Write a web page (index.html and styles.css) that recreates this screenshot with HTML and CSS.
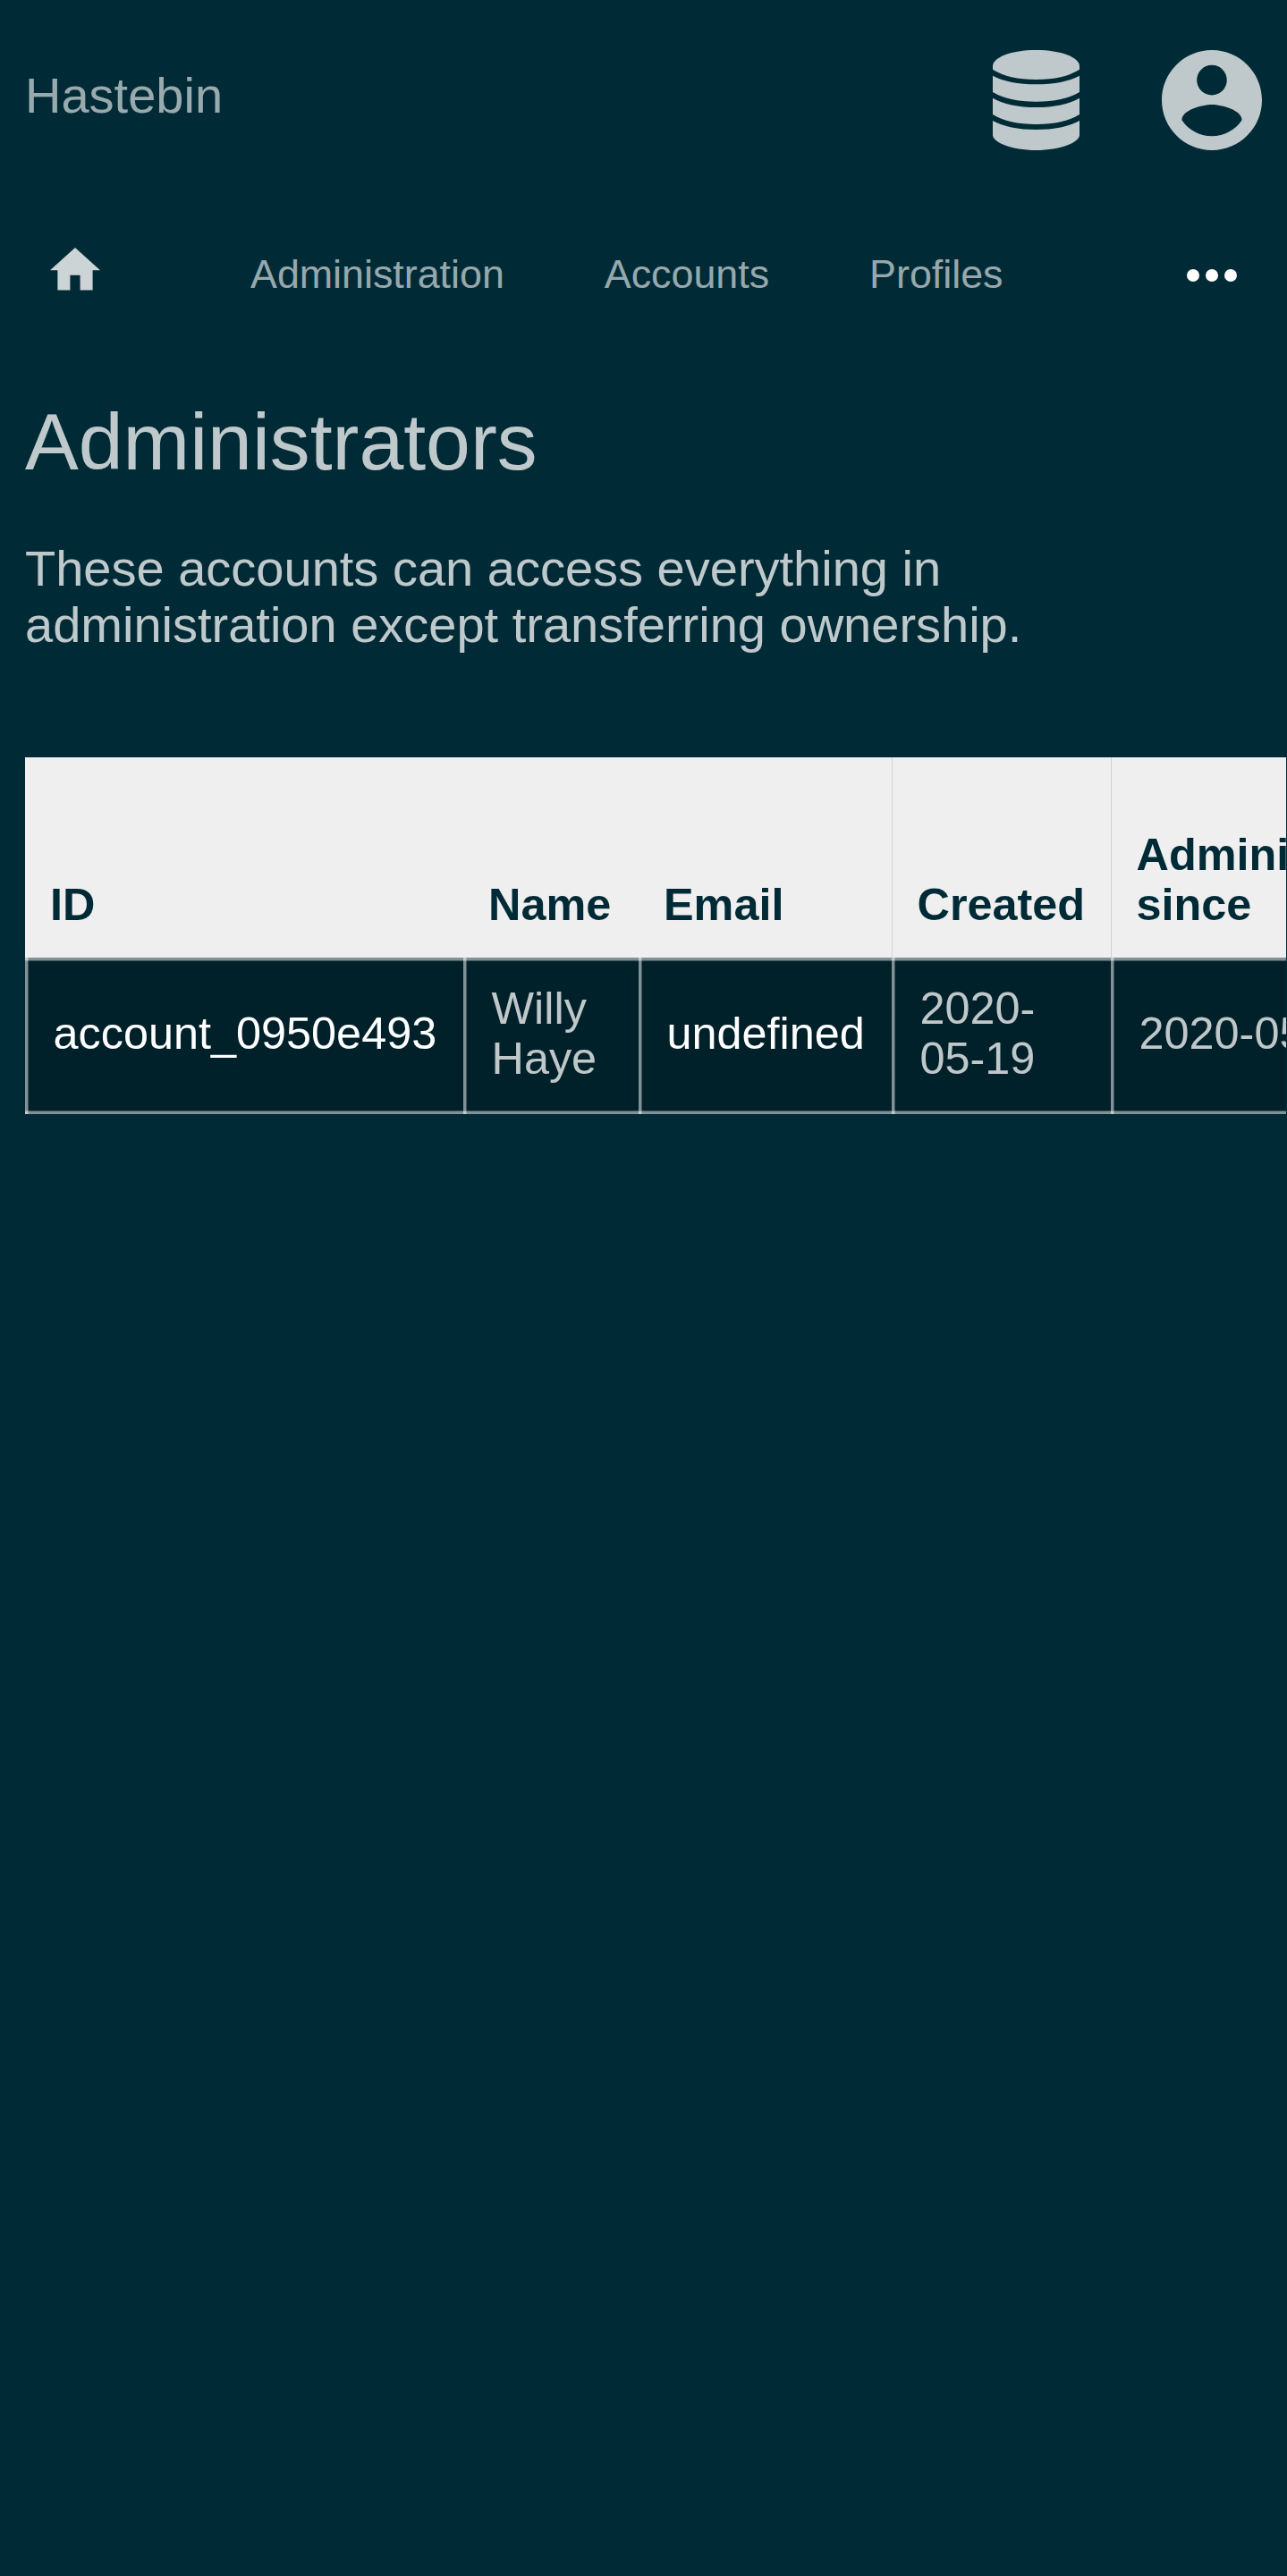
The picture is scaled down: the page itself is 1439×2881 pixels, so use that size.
FILE: index.html
```html
<!DOCTYPE html>
<html lang="en">
<head>
<meta charset="utf-8">
<title>Hastebin - Administrators</title>
<link rel="stylesheet" href="styles.css">
</head>
<body>
<header class="topbar">
  <a class="brand">Hastebin</a>
  <div class="tools">
    <svg class="icon-db" viewBox="0 0 97 112" aria-hidden="true">
      <path d="M0 18C0 8 21 0 48.500 0S97 8 97 18V21.700Q79 33 48.500 33T0 21.700Z"/>
      <path d="M0 28.700Q18 38.300 48.500 38.300T97 28.700V47Q79 57.700 48.500 57.700T0 47Z"/>
      <path d="M0 53.700Q18 64 48.500 64T97 53.700V72Q79 83 48.500 83T0 72Z"/>
      <path d="M0 79Q18 89 48.500 89T97 79V95C97 103 76 112 48.500 112S0 103 0 95Z"/>
    </svg>
    <svg class="icon-account" viewBox="2 2 20 20" aria-hidden="true">
      <path d="M12 2C6.480 2 2 6.480 2 12s4.480 10 10 10 10-4.480 10-10S17.520 2 12 2zm0 3c1.660 0 3 1.340 3 3s-1.340 3-3 3-3-1.340-3-3 1.340-3 3-3zm0 14.200c-2.500 0-4.710-1.280-6-3.220.030-1.990 4-3.080 6-3.080 1.990 0 5.970 1.090 6 3.080-1.290 1.940-3.500 3.220-6 3.220z"/>
    </svg>
  </div>
</header>
<nav class="nav">
  <svg class="icon-home" viewBox="2 3 20 17" aria-hidden="true"><path d="M10 20v-6h4v6h5v-8h3L12 3 2 12h3v8z"/></svg>
  <div class="links">
    <a>Administration</a>
    <a>Accounts</a>
    <a>Profiles</a>
  </div>
  <svg class="icon-more" viewBox="0 0 56 14" aria-hidden="true"><circle cx="7" cy="7" r="7"/><circle cx="28" cy="7" r="7"/><circle cx="49" cy="7" r="7"/></svg>
</nav>
<main class="content">
  <h1>Administrators</h1>
  <p class="intro">These accounts can access everything in administration except transferring ownership.</p>
  <div class="table-scroll">
    <table>
      <colgroup><col class="c-id"><col class="c-name"><col class="c-email"><col class="c-created"><col class="c-since"></colgroup>
      <thead>
        <tr><th>ID</th><th>Name</th><th>Email</th><th class="ruled">Created</th><th class="ruled">Administrator since</th></tr>
      </thead>
      <tbody>
        <tr><td><a>account_0950e493</a></td><td>Willy Haye</td><td><a>undefined</a></td><td>2020-05-19</td><td>2020-05-19</td></tr>
      </tbody>
    </table>
  </div>
</main>
</body>
</html>
```
FILE: styles.css
```css
* { box-sizing: border-box; }
html, body { margin: 0; }
body {
  min-height: 2881px;
  overflow: hidden;
  background: #002b36;
  color: rgba(255, 255, 255, .75);
  font: 56px/63px "Liberation Sans", Arial, sans-serif;
}
svg { display: block; fill: currentColor; }

.topbar {
  display: flex;
  justify-content: space-between;
  align-items: flex-start;
  height: 224px;
  padding: 56px 28px 0;
}
.brand { padding-top: 19px; color: rgba(255, 255, 255, .6); }
.tools { display: flex; gap: 92px; }
.icon-db { width: 97px; height: 112px; }
.icon-account { width: 112px; height: 112px; }

.nav {
  display: flex;
  align-items: flex-start;
  height: 220px;
  padding: 53px 56px 0;
  font-size: 44.8px;
  line-height: 52px;
}
.icon-home { width: 56px; height: 47.6px; color: rgba(255, 255, 255, .8); }
.links {
  display: flex;
  flex: 1;
  gap: 112px;
  padding: 3px 0 0 168px;
  color: rgba(255, 255, 255, .6);
}
.icon-more { width: 56px; height: 14px; margin-top: 24px; color: #fff; }

.content { padding-left: 28px; }
h1 { margin: 0 0 60px; font-size: 89.6px; line-height: 100px; font-weight: 400; }
.intro { width: 1200px; margin: 0 0 117px; }

.table-scroll { width: 1410px; overflow: hidden; }
table {
  width: 1600px;
  table-layout: fixed;
  border-collapse: separate;
  border-spacing: 0;
  font-size: 50.4px;
  line-height: 56px;
}
.c-id { width: 490px; }
.c-name { width: 196px; }
.c-email { width: 283px; }
.c-created { width: 245px; }
.c-since { width: 386px; }
th {
  height: 224px;
  padding: 28px 0 31px 28px;
  background: #efefef;
  color: #002b36;
  text-align: left;
  vertical-align: bottom;
}
.ruled { padding-left: 28.5px; box-shadow: inset 1px 0 #d0d2d2; }
td {
  --line: rgba(255, 255, 255, .5);
  --edge: rgba(255, 255, 255, .25);
  height: 175px;
  padding: 29px 20px 34px 31.5px;
  background:
    linear-gradient(90deg, var(--line) 3px, var(--edge) 3px) 0 0 / 4px 100% no-repeat,
    linear-gradient(var(--line) 3px, var(--edge) 3px) 0 0 / 100% 4px no-repeat,
    linear-gradient(var(--edge) 1px, var(--line) 1px) 0 100% / 100% 4px no-repeat,
    #00212a;
  vertical-align: middle;
}
td a { color: #fff; }
```
